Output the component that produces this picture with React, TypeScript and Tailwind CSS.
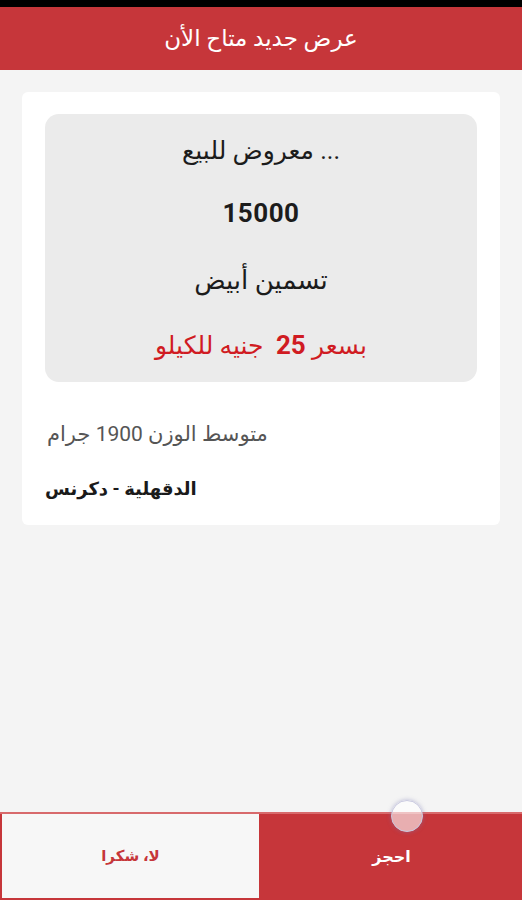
import React from "react";

export default function App() {
  const font = { fontFamily: "Roboto, 'DejaVu Sans', sans-serif" };
  return (
    <div className="relative w-[522px] h-[900px] bg-[#f4f4f4] flex flex-col overflow-hidden" style={font}>
      <div className="h-[7px] bg-black shrink-0" />
      <div className="h-[63px] bg-[#c6363a] flex items-center justify-center shrink-0">
        <span dir="rtl" className="text-white text-[23px] leading-[30px]">عرض جديد متاح الأن</span>
      </div>
      <div className="flex-1 px-[22px] pt-[22px]">
        <div className="bg-white rounded-[6px] px-[23px] pt-[22px] pb-[22px]">
          <div className="bg-[#ebebeb] rounded-[14px] flex flex-col items-center pt-[20px] pb-[20px]">
            <div dir="rtl" className="text-[25px] text-[#1c1c1c] h-[34px] leading-[34px]">... معروض للبيع</div>
            <div className="text-[26px] font-bold text-[#1c1c1c] mt-[28px] h-[34px] leading-[34px] tracking-[0.5px]">15000</div>
            <div dir="rtl" className="text-[26px] text-[#1c1c1c] mt-[32px] h-[36px] leading-[36px]">تسمين أبيض</div>
            <div dir="rtl" className="text-[25px] text-[#d01b22] mt-[30px] h-[34px] leading-[34px] whitespace-pre">
              بسعر <span className="font-bold text-[26px]">25</span>  جنيه للكيلو
            </div>
          </div>
          <div className="flex justify-start pl-[2px] mt-[38px]">
            <div dir="rtl" className="text-[21px] text-[#555] h-[28px] leading-[28px]">متوسط الوزن 1900 جرام</div>
          </div>
          <div className="flex justify-start mt-[27px]">
            <div dir="rtl" className="text-[18px] font-bold text-[#1a1a1a] h-[28px] leading-[28px]">الدقهلية - دكرنس</div>
          </div>
        </div>
      </div>
      <div className="h-[88px] flex shrink-0 border-t-[2px] border-[#d86a6c]">
        <div className="w-[261px] bg-[#f7f7f7] border-l-[2px] border-b-[2px] border-r-[2px] border-[#c6363a] flex items-center justify-center">
          <span dir="rtl" className="text-[#c6363a] text-[15px] font-bold">لا، شكرا</span>
        </div>
        <div className="flex-1 bg-[#c6363a] flex items-center justify-center">
          <span dir="rtl" className="text-white text-[16px] font-bold">احجز</span>
        </div>
      </div>
      <div className="absolute left-[391px] top-[800px] w-[32px] h-[32px] rounded-full bg-white/60 border border-[#c9c9e0] shadow-[0_0_4px_rgba(120,120,180,0.5)]" />
    </div>
  );
}
